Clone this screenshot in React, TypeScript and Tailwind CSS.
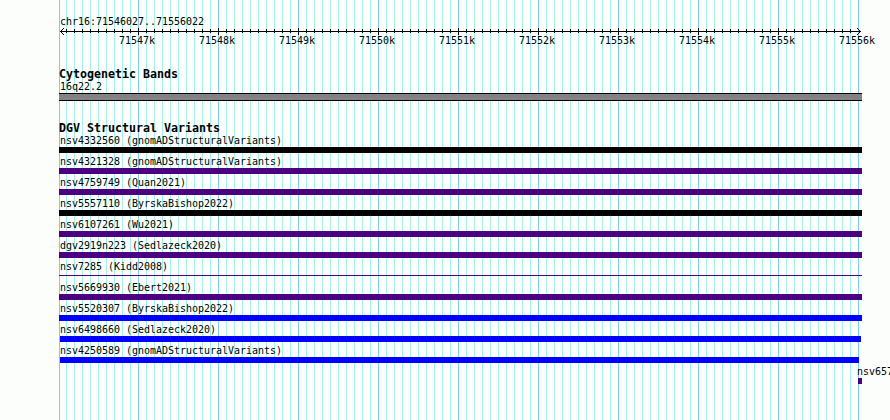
import React from "react";

const MINOR = "#a5f0ee";
const MAJOR = "#7fcdf0";

const minorXs = Array.from({ length: 100 }, (_, i) => 66 + i * 8);
const majorXs = Array.from({ length: 10 }, (_, i) => 138 + i * 80);

type Variant = {
  label: string;
  bar: string;
};

const variants: Variant[] = [
  { label: "nsv4332560 (gnomADStructuralVariants)", bar: "ml-[59px] w-[803px] h-1.5 bg-black" },
  { label: "nsv4321328 (gnomADStructuralVariants)", bar: "ml-[59px] w-[803px] h-1.5 bg-[#4b0082]" },
  { label: "nsv4759749 (Quan2021)", bar: "ml-[59px] w-[803px] h-1.5 bg-[#4b0082]" },
  { label: "nsv5557110 (ByrskaBishop2022)", bar: "ml-[59px] w-[803px] h-1.5 bg-black" },
  { label: "nsv6107261 (Wu2021)", bar: "ml-[59px] w-[803px] h-1.5 bg-[#4b0082]" },
  { label: "dgv2919n223 (Sedlazeck2020)", bar: "ml-[59px] w-[803px] h-1.5 bg-[#4b0082]" },
  { label: "nsv7285 (Kidd2008)", bar: "ml-[59px] mt-0.5 w-[803px] h-px bg-[#4b0082]" },
  { label: "nsv5669930 (Ebert2021)", bar: "ml-[59px] w-[803px] h-1.5 bg-[#4b0082]" },
  { label: "nsv5520307 (ByrskaBishop2022)", bar: "ml-[59px] w-[803px] h-1.5 bg-[#0000ff]" },
  { label: "nsv6498660 (Sedlazeck2020)", bar: "ml-[60px] w-[801px] h-1.5 bg-[#0000ff]" },
  { label: "nsv4250589 (gnomADStructuralVariants)", bar: "ml-[60px] w-[799px] h-1.5 bg-[#0000ff]" },
];

function Grid() {
  return (
    <svg className="absolute inset-0" width="890" height="420" shapeRendering="crispEdges">
      {minorXs.map((x) => (
        <rect key={x} x={x} y="0" width="1" height="420" fill={MINOR} />
      ))}
      {[59, ...majorXs].map((x) => (
        <rect key={x} x={x} y="0" width="1" height="420" fill={MAJOR} />
      ))}
    </svg>
  );
}

function Ruler() {
  return (
    <svg className="block" width="890" height="7" shapeRendering="crispEdges">
      <rect x="60" y="3" width="801" height="1" />
      {minorXs.slice(0, -1).map((x) => (
        <rect key={x} x={x} y="1" width="1" height="4" />
      ))}
      {majorXs.slice(0, -1).map((x) => (
        <rect key={x} x={x} y="0" width="1" height="7" />
      ))}
      {[1, 2, 3].map((d) => (
        <g key={d}>
          <rect x={60 + d} y={3 - d} width="1" height="1" />
          <rect x={60 + d} y={3 + d} width="1" height="1" />
          <rect x={860 - d} y={3 - d} width="1" height="1" />
          <rect x={860 - d} y={3 + d} width="1" height="1" />
        </g>
      ))}
    </svg>
  );
}

function Heading({ children }: { children: string }) {
  return <h2 className="h-3 pl-[59px] text-[11.63px] leading-3 font-bold">{children}</h2>;
}

export default function App() {
  return (
    <main className="relative h-[420px] w-[890px] overflow-hidden bg-[#fcfefc] font-['DejaVu_Sans_Mono','Liberation_Mono',monospace] text-[9.97px] leading-3 whitespace-pre text-black">
      <Grid />
      <div className="relative flex flex-col">
        <div className="mt-4 h-3 pl-[60px]">chr16:71546027..71556022</div>
        <Ruler />
        <div className="flex h-3 pl-[97px]">
          {majorXs.map((x, i) => (
            <span key={x} className="w-20 shrink-0 text-center">
              {71547 + i}k
            </span>
          ))}
        </div>
        <section className="mt-[21px]">
          <Heading>Cytogenetic Bands</Heading>
          <div className="h-[13px] pt-px pl-[60px]">16q22.2</div>
          <div className="ml-[59px] h-2 w-[803px] border-y border-black bg-[#848284]" />
        </section>
        <section className="mt-[21px]">
          <Heading>DGV Structural Variants</Heading>
          {variants.map((v) => (
            <div key={v.label} className="h-[21px]">
              <div className="h-[13px] pt-px pl-[60px]">{v.label}</div>
              <div className={v.bar} />
            </div>
          ))}
          <div className="h-[21px] pl-[858px]">
            <div className="-ml-px h-[13px] pt-px">nsv657</div>
            <div className="h-1.5 w-1 bg-[#4b0082]" />
          </div>
        </section>
      </div>
    </main>
  );
}
